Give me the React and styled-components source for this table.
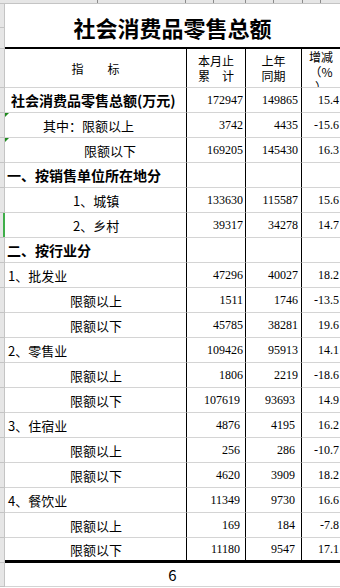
import React from 'react';
import styled, { createGlobalStyle } from 'styled-components';

const GlobalStyle = createGlobalStyle`
  html, body { margin: 0; padding: 0; background: #fff; }
  body { font-family: "Noto Sans CJK SC", "Noto Sans", sans-serif; color: #000; }
  * { box-sizing: border-box; }
`;

const GRID = '#d4d4d4';
const STRIP = '#e6e6e6';
const STRIP_LINE = '#c4c4c4';
const COLS = '5px 181px 59px 56px 1fr';

const Sheet = styled.div`
  width: 340px;
  height: 588px;
  overflow: hidden;
  display: flex;
  flex-direction: column;
  background: #fff;
`;

const ColumnBar = styled.div`
  display: grid;
  grid-template-columns: 98px 88px 28px 32px 28px 29px 18px 1fr;
  height: 4px;
  flex: none;
  background: ${STRIP};
  border-bottom: 1px solid ${STRIP_LINE};
`;

const ColumnTick = styled.div`
  border-right: 1px solid #8c8c8c;
`;

const Row = styled.div`
  display: grid;
  grid-template-columns: ${COLS};
  height: ${p => p.$h}px;
  flex: none;
`;

const Stub = styled.div`
  background: ${STRIP};
  border-bottom: 1px solid ${STRIP_LINE};
  box-shadow: inset ${p => (p.$selected ? '-2px 0 0 #3fae49' : `-1px 0 0 ${STRIP_LINE}`)};
  height: ${p => (p.$h ? `${p.$h}px` : 'auto')};
`;

const StubStack = styled.div`
  display: flex;
  flex-direction: column;
`;

const TitleCell = styled.div`
  grid-column: 2 / 6;
  display: flex;
  align-items: center;
  justify-content: center;
  padding-top: 2px;
  border-bottom: 2px solid #000;
  font-size: 22px;
  font-weight: 700;
  white-space: nowrap;
`;

const HeadCell = styled.div`
  display: flex;
  flex-direction: column;
  align-items: center;
  justify-content: ${p => (p.$top ? 'flex-start' : 'center')};
  overflow: hidden;
  font-size: 12px;
  line-height: 15px;
  white-space: pre;
  border-bottom: 1px solid ${GRID};
  border-left: ${p => (p.$first ? 'none' : '1px solid #000')};
`;

const HeadLine = styled.span`
  display: block;
  height: 15px;
`;

const LabelCell = styled.div`
  position: relative;
  display: flex;
  align-items: center;
  padding-left: ${p => p.$indent}px;
  font-size: ${p => (p.$bold ? 14 : 13)}px;
  font-weight: ${p => (p.$bold ? 700 : 400)};
  white-space: nowrap;
  overflow: hidden;
  border-bottom: ${p => (p.$last ? '3px solid #000' : `1px solid ${GRID}`)};
`;

const Flag = styled.span`
  position: absolute;
  top: 0;
  left: 0;
  width: 0;
  height: 0;
  border-top: 4px solid #1f8a1f;
  border-right: 4px solid transparent;
`;

const NumCell = styled.div`
  display: flex;
  align-items: center;
  justify-content: flex-end;
  padding-right: ${p => p.$pad}px;
  font-family: "Liberation Serif", "Times New Roman", serif;
  font-size: 12px;
  white-space: nowrap;
  overflow: hidden;
  border-left: 1px solid #000;
  border-bottom: ${p => (p.$last ? '3px solid #000' : `1px solid ${GRID}`)};
`;

const FooterCell = styled.div`
  grid-column: 2 / 6;
  display: flex;
  align-items: center;
  justify-content: center;
  font-family: "Noto Sans CJK SC", "Noto Sans", sans-serif;
  font-size: 15px;
  border-bottom: 1px solid ${GRID};
`;

const rows = [
  { label: '社会消费品零售总额(万元)', bold: true, indent: 6, a: '172947', b: '149865', c: '15.4' },
  { label: '其中：限额以上', indent: 38, a: '3742', b: '4435', c: '-15.6', flag: true },
  { label: '限额以下', indent: 79, a: '169205', b: '145430', c: '16.3', flag: true },
  { label: '一、按销售单位所在地分', bold: true, indent: 2 },
  { label: '1、城镇', indent: 68, a: '133630', b: '115587', c: '15.6' },
  { label: '2、乡村', indent: 68, a: '39317', b: '34278', c: '14.7', selected: true },
  { label: '二、按行业分', bold: true, indent: 2 },
  { label: '1、批发业', indent: 3, a: '47296', b: '40027', c: '18.2' },
  { label: '限额以上', indent: 65, a: '1511', b: '1746', c: '-13.5' },
  { label: '限额以下', indent: 65, a: '45785', b: '38281', c: '19.6' },
  { label: '2、零售业', indent: 3, a: '109426', b: '95913', c: '14.1' },
  { label: '限额以上', indent: 65, a: '1806', b: '2219', c: '-18.6' },
  { label: '限额以下', indent: 65, a: '107619', b: '93693', c: '14.9', shift: true },
  { label: '3、住宿业', indent: 3, a: '4876', b: '4195', c: '16.2', shift: true },
  { label: '限额以上', indent: 65, a: '256', b: '286', c: '-10.7', shift: true },
  { label: '限额以下', indent: 65, a: '4620', b: '3909', c: '18.2', shift: true },
  { label: '4、餐饮业', indent: 3, a: '11349', b: '9730', c: '16.6', shift: true },
  { label: '限额以上', indent: 65, a: '169', b: '184', c: '-7.8', shift: true },
  { label: '限额以下', indent: 65, a: '11180', b: '9547', c: '17.1', shift: true, last: true },
];

export default function App() {
  return (
    <>
      <GlobalStyle />
      <Sheet>
        <ColumnBar>
          {Array.from({ length: 7 }).map((_, i) => (
            <ColumnTick key={i} />
          ))}
          <div />
        </ColumnBar>

        <Row $h={45}>
          <StubStack>
            <Stub $h={24} />
            <Stub $h={21} />
          </StubStack>
          <TitleCell>社会消费品零售总额</TitleCell>
        </Row>

        <Row $h={39}>
          <Stub />
          <HeadCell $first>{'指　　标'}</HeadCell>
          <HeadCell>
            <HeadLine>本月止</HeadLine>
            <HeadLine>{'累　计'}</HeadLine>
          </HeadCell>
          <HeadCell>
            <HeadLine>上年</HeadLine>
            <HeadLine>同期</HeadLine>
          </HeadCell>
          <HeadCell $top>
            <HeadLine>增减</HeadLine>
            <HeadLine>（%</HeadLine>
            <HeadLine>）</HeadLine>
          </HeadCell>
        </Row>

        {rows.map((r, i) => (
          <Row key={i} $h={25}>
            <Stub $selected={r.selected} />
            <LabelCell $indent={r.indent} $bold={r.bold} $last={r.last}>
              {r.flag && <Flag />}
              {r.label}
            </LabelCell>
            <NumCell $pad={r.shift ? 5 : 2} $last={r.last}>{r.a}</NumCell>
            <NumCell $pad={r.shift ? 6 : 3} $last={r.last}>{r.b}</NumCell>
            <NumCell $pad={1} $last={r.last}>{r.c}</NumCell>
          </Row>
        ))}

        <Row $h={24}>
          <Stub />
          <FooterCell>6</FooterCell>
        </Row>
      </Sheet>
    </>
  );
}
